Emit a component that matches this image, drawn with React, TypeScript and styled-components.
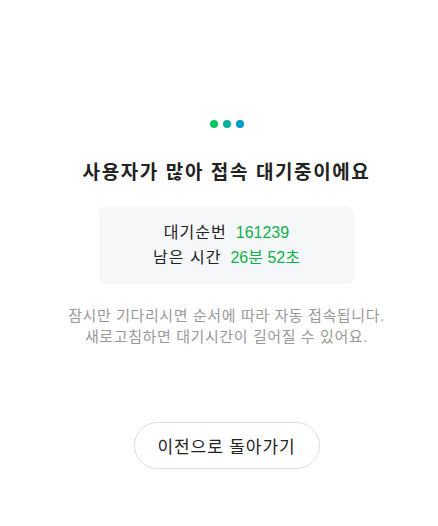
import React from "react";
import styled, { createGlobalStyle } from "styled-components";

const Global = createGlobalStyle`
  html, body { margin: 0; padding: 0; background: #fff; }
  body { font-family: "Liberation Sans", "Noto Sans CJK KR", sans-serif; }
`;

const Page = styled.main`
  display: flex;
  flex-direction: column;
  align-items: center;
  padding: 120px 0 0 15px;
  width: 438px;
  box-sizing: border-box;
`;

const Dots = styled.div`
  display: flex;
  gap: 5px;
`;

const Dot = styled.span<{ $c: string }>`
  width: 8px;
  height: 8px;
  border-radius: 50%;
  background: ${(p) => p.$c};
`;

const Title = styled.h1`
  margin: 31px 0 0;
  font-size: 19px;
  line-height: 28px;
  font-weight: 700;
  color: #222;
  letter-spacing: 1.6px;
`;

const InfoBox = styled.div`
  margin-top: 19px;
  width: 255px;
  height: 78px;
  box-sizing: border-box;
  border-radius: 8px;
  background: #f6f7f9;
  display: flex;
  flex-direction: column;
  align-items: center;
  justify-content: center;
  gap: 3px;
`;

const InfoRow = styled.div`
  font-size: 16px;
  line-height: 22px;
  color: #222;
  display: flex;
  gap: 9px;
`;

const Label = styled.span`
  letter-spacing: 1px;
`;

const Value = styled.span`
  color: #0db04d;
`;

const Notice = styled.p`
  margin: 21px 0 0;
  font-size: 15px;
  line-height: 21px;
  color: #999;
  text-align: center;
  letter-spacing: 0.6px;
`;

const BackButton = styled.button`
  margin-top: 75px;
  width: 186px;
  height: 47px;
  border: 1px solid #dcdcdc;
  border-radius: 24px;
  background: #fff;
  font-family: inherit;
  font-size: 17px;
  letter-spacing: 0.9px;
  color: #222;
  cursor: pointer;
`;

export default function App() {
  return (
    <>
      <Global />
      <Page>
        <Dots>
          <Dot $c="#0bc35c" />
          <Dot $c="#00b39a" />
          <Dot $c="#0099cc" />
        </Dots>
        <Title>사용자가 많아 접속 대기중이에요</Title>
        <InfoBox>
          <InfoRow>
            <Label>대기순번</Label>
            <Value>161239</Value>
          </InfoRow>
          <InfoRow>
            <Label>남은 시간</Label>
            <Value>26분 52초</Value>
          </InfoRow>
        </InfoBox>
        <Notice>
          잠시만 기다리시면 순서에 따라 자동 접속됩니다.
          <br />
          새로고침하면 대기시간이 길어질 수 있어요.
        </Notice>
        <BackButton>이전으로 돌아가기</BackButton>
      </Page>
    </>
  );
}
